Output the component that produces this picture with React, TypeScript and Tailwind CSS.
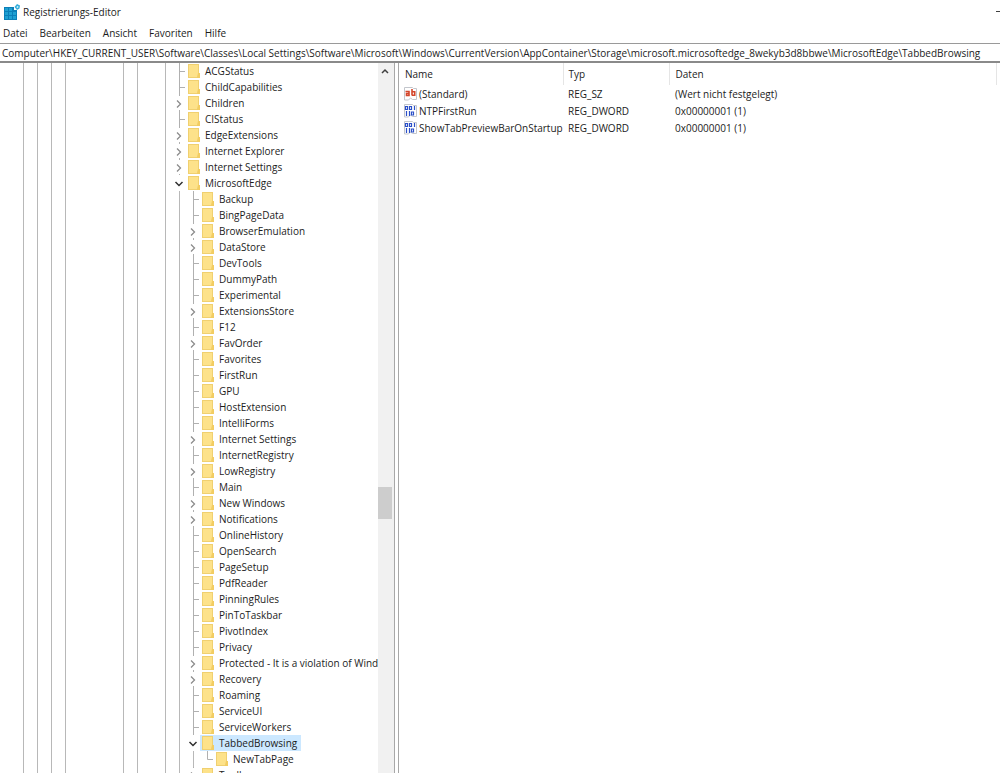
import React from 'react';
import clsx from 'clsx';

type Node = {
  name: string;
  level: 1 | 2 | 3;
  state?: 'closed' | 'open';
  last?: boolean;
  selected?: boolean;
};

const leaf = (name: string): Node => ({ name, level: 2 });
const closed = (name: string): Node => ({ name, level: 2, state: 'closed' });

const nodes: Node[] = [
  { name: 'ACGStatus', level: 1 },
  { name: 'ChildCapabilities', level: 1 },
  { name: 'Children', level: 1, state: 'closed' },
  { name: 'CIStatus', level: 1 },
  { name: 'EdgeExtensions', level: 1, state: 'closed' },
  { name: 'Internet Explorer', level: 1, state: 'closed' },
  { name: 'Internet Settings', level: 1, state: 'closed' },
  { name: 'MicrosoftEdge', level: 1, state: 'open' },
  leaf('Backup'),
  leaf('BingPageData'),
  closed('BrowserEmulation'),
  closed('DataStore'),
  leaf('DevTools'),
  leaf('DummyPath'),
  leaf('Experimental'),
  closed('ExtensionsStore'),
  leaf('F12'),
  closed('FavOrder'),
  leaf('Favorites'),
  leaf('FirstRun'),
  leaf('GPU'),
  leaf('HostExtension'),
  leaf('IntelliForms'),
  closed('Internet Settings'),
  leaf('InternetRegistry'),
  closed('LowRegistry'),
  leaf('Main'),
  closed('New Windows'),
  closed('Notifications'),
  leaf('OnlineHistory'),
  leaf('OpenSearch'),
  leaf('PageSetup'),
  leaf('PdfReader'),
  leaf('PinningRules'),
  leaf('PinToTaskbar'),
  leaf('PivotIndex'),
  leaf('Privacy'),
  closed('Protected - It is a violation of Windows Policy to modify'),
  closed('Recovery'),
  leaf('Roaming'),
  leaf('ServiceUI'),
  leaf('ServiceWorkers'),
  { name: 'TabbedBrowsing', level: 2, state: 'open', selected: true },
  { name: 'NewTabPage', level: 3, last: true },
  closed('Toolbar'),
];

const values = [
  { name: '(Standard)', type: 'REG_SZ', data: '(Wert nicht festgelegt)' },
  { name: 'NTPFirstRun', type: 'REG_DWORD', data: '0x00000001 (1)' },
  { name: 'ShowTabPreviewBarOnStartup', type: 'REG_DWORD', data: '0x00000001 (1)' },
];

const menus = ['Datei', 'Bearbeiten', 'Ansicht', 'Favoriten', 'Hilfe'];

const path =
  'Computer\\HKEY_CURRENT_USER\\Software\\Classes\\Local Settings\\Software\\Microsoft\\Windows\\CurrentVersion\\AppContainer\\Storage\\microsoft.microsoftedge_8wekyb3d8bbwe\\MicrosoftEdge\\TabbedBrowsing';

const AppIcon = () => (
  <svg className="h-4 w-4 shrink-0" viewBox="0 0 16 16" aria-hidden="true">
    <path d="M0 3h10v3h3v10H0z" fill="#0b7fb8" />
    <path d="M1 4h3v3H1zM5 4h3v3H5zM1 8h3v3H1zM5 8h3v3H5zM9 8h3v3H9zM1 12h3v3H1zM5 12h3v3H5zM9 12h3v3H9z" fill="#1ea0d2" />
    <path d="M13 0l3 1.500-.5 3-2.500 1.500L10.500 3z" fill="#35aedb" />
    <path d="M13 2l1.500.5-.5 1.500-1.500-.5z" fill="#d8f3fc" />
  </svg>
);

const Folder = () => (
  <svg className="h-4 w-3 shrink-0" viewBox="0 0 12 16" aria-hidden="true">
    <path d="M0 1h11v9l1 1v4H0z" fill="#f0d070" />
    <path d="M1 2h9v12H1z" fill="#fde28a" />
    <path d="M9 14l1-4h2v5H9z" fill="#f2cd63" />
  </svg>
);

const StringIcon = () => (
  <svg className="h-4 w-4 shrink-0" viewBox="0 0 16 16" aria-hidden="true">
    <path d="M1.500 1.500h8l1 1h3v11h-4l-2-1.500-2 2h-4z" fill="#fff" stroke="#c3c6cc" />
    <g fill="none" stroke="#d4452a" strokeWidth="1.600">
      <path d="M2.500 5.500h3.500v4H3.500v-2H6M9 3v6.500M9 5.700h2.700v3.500H9" />
    </g>
  </svg>
);

const BinaryIcon = () => (
  <svg className="h-4 w-4 shrink-0" viewBox="0 0 16 16" aria-hidden="true">
    <path d="M1.500 1.500h8l1 1h3v11h-4l-2-1.500-2 2h-4z" fill="#fff" stroke="#c3c6cc" />
    <g fill="none" stroke="#2b50c8" strokeWidth="1.200">
      <path d="M2.500 3.500h2v3h-2zM6.500 3.500h2v3h-2zM11.500 3v4M3.500 8v5M6.500 8v5M8.500 9h2v3h-2z" />
    </g>
  </svg>
);

const Guide = ({ line = true }: { line?: boolean }) => (
  <span className="flex h-4 w-3.5 shrink-0 justify-center">
    {line && <span className="w-px bg-[#b8b8b8]" />}
  </span>
);

const Branch = ({ node }: { node: Node }) => (
  <svg className="h-4 w-3.5 shrink-0" viewBox="0 0 14 16" fill="none" aria-hidden="true">
    {!node.state && (
      <path d={node.last ? 'M7.500 0v8.500H13' : 'M7.500 0v16M8 8.500h5'} stroke="#b0b0b0" />
    )}
    {node.state === 'closed' && (
      <>
        <path d="M7.500 0v1M7.500 15v1" stroke="#b0b0b0" />
        <path d="M5 5.500l3.500 3.500L5 12.500" stroke="#8c8c8c" strokeWidth="1.300" />
      </>
    )}
    {node.state === 'open' && <path d="M3.500 7L7 10.500 10.500 7" stroke="#303030" strokeWidth="1.500" />}
  </svg>
);

const TreeRow = ({ node }: { node: Node }) => (
  <li className="flex h-4 pl-4">
    <Guide />
    <Guide />
    <Guide />
    <Guide />
    <span className="w-11 shrink-0" />
    <Guide />
    <Guide />
    <Guide line={false} />
    <Guide />
    {node.level > 1 && <Guide />}
    {node.level > 2 && <Guide />}
    <Branch node={node} />
    <button
      className={clsx(
        'flex h-4 items-center gap-[5px] whitespace-nowrap pl-0.5 pr-1',
        node.selected && 'bg-[#cce8ff]'
      )}
    >
      <Folder />
      {node.name}
    </button>
  </li>
);

const App = () => {
  const [address, setAddress] = React.useState(path);

  return (
    <div className="flex h-screen flex-col overflow-hidden bg-white font-['Open_Sans',sans-serif] text-[10px] leading-4 text-[#1c1c1c]">
      <header className="flex h-[23px] shrink-0 items-center gap-[3px] pl-1">
        <AppIcon />
        <h1 className="flex-1">Registrierungs-Editor</h1>
        <button aria-label="Minimieren" className="h-0.5 w-1">
          <span className="block h-px bg-[#404040]" />
        </button>
      </header>

      <nav className="flex h-5 shrink-0 items-center gap-3 pl-[3px]">
        {menus.map((menu) => (
          <button key={menu}>{menu}</button>
        ))}
      </nav>

      <input
        aria-label="Adresse"
        className="h-5 w-full shrink-0 border-b-2 border-t border-b-[#8a8a8a] border-t-[#9a9a9a] px-0.5 outline-none"
        value={address}
        onChange={(e) => setAddress(e.target.value)}
      />

      <main className="flex min-h-0 flex-1">
        <div className="flex w-[395px] shrink-0 border-r border-[#a8a8a8]">
          <ul className="min-w-0 flex-1 overflow-hidden">
            {nodes.map((node, i) => (
              <TreeRow key={i} node={node} />
            ))}
          </ul>
          <div className="flex w-4 shrink-0 flex-col bg-[#f1f1f1] pr-0.5">
            <button aria-label="Nach oben" className="flex h-4 items-center justify-center">
              <svg className="h-2 w-2" viewBox="0 0 8 8" fill="none" aria-hidden="true">
                <path d="M1 6l3-3 3 3" stroke="#404040" strokeWidth="1.500" />
              </svg>
            </button>
            <div className="flex-[407]" />
            <div className="h-8 bg-[#cdcdcd]" />
            <div className="flex-[254]" />
          </div>
        </div>

        <section className="ml-[3px] min-w-0 flex-1 border-l border-[#a8a8a8]">
          <table className="w-full table-fixed text-left">
            <colgroup>
              <col className="w-[164px]" />
              <col className="w-[106px]" />
              <col />
              <col className="w-1" />
            </colgroup>
            <thead>
              <tr className="h-[22px]">
                <th className="border-r border-[#e5e5e5] p-0 pl-1.5 font-normal">Name</th>
                <th className="border-r border-[#e5e5e5] p-0 pl-[5px] font-normal">Typ</th>
                <th className="border-r border-[#e5e5e5] p-0 pl-1.5 font-normal">Daten</th>
                <td className="p-0" />
              </tr>
            </thead>
            <tbody>
              {values.map((value) => (
                <tr key={value.name} className="h-[17px]">
                  <td className="p-0 pl-1">
                    <span className="flex items-center whitespace-nowrap">
                      {value.type === 'REG_SZ' ? <StringIcon /> : <BinaryIcon />}
                      {value.name}
                    </span>
                  </td>
                  <td className="p-0 pl-[5px]">{value.type}</td>
                  <td className="p-0 pl-1.5">{value.data}</td>
                  <td className="p-0" />
                </tr>
              ))}
            </tbody>
          </table>
        </section>
      </main>
    </div>
  );
};

export default App;
